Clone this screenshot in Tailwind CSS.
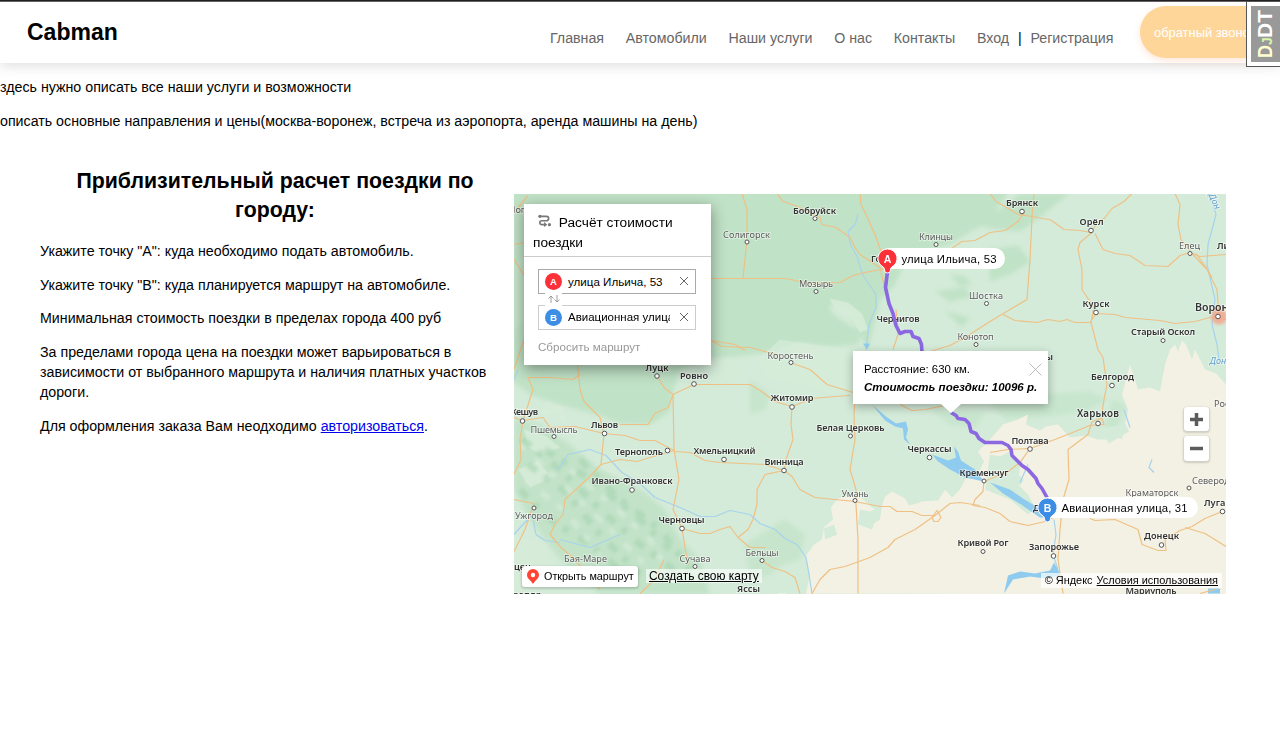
<!DOCTYPE html>
<html lang="ru">
<head>
<meta charset="utf-8">
<title>Cabman</title>
<script src="https://cdn.jsdelivr.net/npm/@tailwindcss/browser@4"></script>
</head>
<body class="relative h-[730px] overflow-hidden bg-white font-['Liberation_Sans',Arial,sans-serif] text-[14.23px] leading-[19.8px] text-black">
<div class="h-[2px] border-b border-[#666] bg-[#231f22]"></div>
<header class="flex h-[61px] items-start bg-white shadow-[0_3px_12px_rgba(0,0,0,0.13)]">
  <div class="ml-[27px] mt-[15px] text-[23px] leading-[30px] font-bold whitespace-nowrap">Cabman</div>
  <nav class="ml-auto mt-[27.400px] mr-[26.500px] flex gap-[21.700px] whitespace-nowrap text-[#666]">
    <a>Главная</a><a>Автомобили</a><a>Наши услуги</a><a>О нас</a><a>Контакты</a>
    <div class="flex gap-[8.800px]"><a>Вход</a><span class="text-black">|</span><a>Регистрация</a></div>
  </nav>
  <button class="mt-[4px] h-[52px] w-[140px] shrink-0 rounded-l-full bg-[#ffd699] pt-[2px] pl-[14px] text-left text-[12.9px] whitespace-nowrap text-white shadow-[0_3px_7px_rgba(255,150,90,0.22)]">обратный звонок</button>
</header>
<div class="absolute top-[1px] left-[1246px] h-[66px] w-[40px] border border-[#555] bg-white p-[4px]">
  <div class="flex h-[56px] w-[40px] items-center bg-[#999]">
    <svg width="30" height="56" viewBox="0 0 30 56" font-family="Liberation Sans, Arial, sans-serif" font-weight="bold" fill="#fff"><g transform="translate(21 52) rotate(-90)"><text font-size="20" x="0" y="0" textLength="13" lengthAdjust="spacingAndGlyphs" fill="#ffffd0">D</text><text font-size="14" x="13" y="0" textLength="7" fill="#d8f5a8">J</text><text font-size="21" x="20" y="0" textLength="28" lengthAdjust="spacingAndGlyphs">DT</text></g></svg>
  </div>
</div>
<main>
  <p class="mt-[15px]">здесь нужно описать все наши услуги и возможности</p>
  <p class="mt-[14px]">описать основные направления и цены(москва-воронеж, встреча из аэропорта, аренда машины на день)</p>
  <div class="mt-[35px] flex items-start">
    <section class="ml-[40px] w-[470px] shrink-0">
      <h2 class="text-center text-[21.3px] leading-[29.6px] font-bold">Приблизительный расчет поездки по<br>городу:</h2>
      <div class="mt-[16px] flex flex-col gap-[14.050px] whitespace-nowrap">
        <p>Укажите точку "А": куда необходимо подать автомобиль.</p>
        <p>Укажите точку "В": куда планируется маршрут на автомобиле.</p>
        <p>Минимальная стоимость поездки в пределах города 400 руб</p>
        <p>За пределами города цена на поездки может варьироваться в<br>зависимости от выбранного маршрута и наличия платных участков<br>дороги.</p>
        <p>Для оформления заказа Вам неодходимо <a class="text-[#0000ee] underline">авторизоваться</a>.</p>
      </div>
    </section>
    <section class="relative mt-[27.400px] ml-[4px] h-[400px] w-[712px] shrink-0 overflow-hidden bg-[#d3ead7]">
      <svg class="block" width="712" height="400" viewBox="514 194.500 712 400">
        <defs><filter id="soft" x="-5%" y="-5%" width="110%" height="110%"><feGaussianBlur stdDeviation="2"/></filter><filter id="hills"><feGaussianBlur stdDeviation="1.800"/></filter></defs>
        <rect x="514" y="194" width="712" height="401" fill="#d4ebd9"/>
        <!-- forests -->
        <g fill="#c0e2c6" filter="url(#soft)">
          <path d="M510 190H1010L1000 205 985 225 970 232 950 245 930 250 905 262 895 285 880 300 874 325 868 350 862 338 848 312 832 302 830 312 848 325 862 333 858 345 830 347 800 343 775 352 745 356 700 360 680 372 672 395 670 412 650 425 620 424 600 416 560 405 530 395 510 380Z"/>
          <path d="M1000 230L1020 232 1040 218 1055 205 1070 194H1020L1000 210 980 218 985 228ZM990 250L1018 246 1030 262 1010 275 990 282Z"/>
          <path d="M514 420L540 425 570 445 600 470 640 490 665 510 680 540 700 560 710 595H600L560 560 530 520 514 490Z" opacity=".85"/>
          <path d="M750 380L770 395 765 410 750 415ZM785 520L805 535 800 560 782 565 770 575 750 580 745 545Z" opacity=".7"/>
          <path d="M935 292L965 288 972 297 950 302ZM945 312L970 318 962 328ZM950 275l14 2 8 7-12 3Z"/>
          <path d="M990 405L1045 395 1090 392 1108 400 1085 412 1040 418 1005 420ZM930 410L985 414 975 428 950 425ZM1112 400L1125 405 1118 430 1104 428Z" opacity=".6"/>
        </g>
        <g fill="#d6ecd9" opacity=".9">
          <path d="M515 265L540 240 560 258 548 300 515 330Z" opacity=".3"/>
          <path d="M728 358L748 365 740 380 690 395 684 380 700 368Z" opacity=".5"/>
          <path d="M780 340L820 346 850 350 853 390 830 395 800 385 770 380 758 360Z" opacity=".8"/>
          <path d="M524 430L545 436 560 448 542 455 528 448ZM518 470L538 462 552 478 530 488Z"/>
          <path d="M514 535L545 545 555 575 530 594H514Z"/>
          <path d="M545 402l20 6-3 8-18-5ZM600 455l20 8 24 12-20 4-22-10Z"/>
          <path d="M829 299L848 303 862 314 868 330 860 333 850 318 838 312ZM780 350L800 344 830 352 825 358Z"/>
        </g>
        <!-- mottled hills of the Carpathians -->
        <g fill="none" filter="url(#hills)" opacity=".75">
          <g stroke="#a3d3ad" stroke-width="7" stroke-dasharray="11 9 6 12" opacity=".7">
            <path d="M522 440L560 470 600 510 640 545 680 575"/><path d="M528 465L565 492 600 535 640 575"/><path d="M545 450L590 480 635 515 670 550"/><path d="M520 490L550 520 590 545 620 570"/><path d="M580 460L620 500 660 530 690 570"/>
          </g>
          <g stroke="#dcefdd" stroke-width="5" stroke-dasharray="7 14 10 10" opacity=".7">
            <path d="M520 445L560 482 605 525 650 570"/><path d="M570 470L615 508 650 540 675 585"/><path d="M525 480L565 512 600 555"/><path d="M520 410L560 415 580 440"/>
          </g>
        </g>
        <!-- steppe -->
        <g fill="#f3f1e3">
          <path d="M806 594L810 575 806 556 814 545 822 540 824 528 833 520 831 508 838 499 850 496 862 499 872 508 880 512 885 497 892 492 905 499 909 506 920 503 924 497 935 490 938 484 945 490 952 498 960 490 965 480 976 478 984 462 978 452 990 440 1003 425 1018 420 1028 415 1026 425 1040 431 1046 427 1058 425 1070 438 1086 436 1098 440 1108 440 1113 436 1122 440 1126 420 1128 410 1122 395 1130 365 1138 390 1150 388 1160 392 1165 365 1170 350 1175 345 1178 352 1182 341 1186 345 1192 360 1195 350 1205 370 1216 374 1226 385V595Z"/>
        </g>
        <g fill="#d4ebd9">
          <path d="M860 510L870 512 882 506 880 520 874 524 872 530 858 525ZM990 455L1000 457 1010 452 1020 466 1018 485 1028 495 1035 508 1028 515 1010 500 985 490Z"/>
          <path d="M920 502l8-16 14-8 6 8-10 15ZM1100 430l25-6 4 8-20 12Z"/>
          <path d="M1012 470l12 10-4 6-10-6ZM825 540l12-5-3-10-10 4Z"/>
        </g>
        <!-- rivers and reservoirs -->
        <g fill="none" stroke="#a7d3ec" stroke-width="1.2" stroke-linejoin="round">
          <path d="M858 215L855 225 848 232 850 244 857 257 863 276 876 295 876 308 869 325 866 350"/>
          <path d="M558 470L568 455 590 450 606 456 622 473 640 484 655 498 680 508 700 517 715 517 730 511 750 515 760 524 775 530 785 539 797 545 806 558 809 575 812 594"/>
          <path d="M560 540L590 548 620 535M514 535L532 515 536 535 545 541 560 543M514 380l4-10M1210 194L1216 215 1208 245 1207 265 1215 300 1212 325 1217 345 1219 360"/>
          <path d="M1054 520L1056 535 1053 555 1058 570M1124 410L1130 428M1152 460l-3 8 5 5M1028 465L1020 483"/>
        </g>
        <g fill="#8ecbef">
          <path d="M872 405L886 417 896 424 906 422 908 430 906 438 910 445 904 440 903 429 895 427 885 421Z"/>
          <path d="M932 455L948 461 956 458 954 447 958 452 961 461 975 470 984 482 965 478 950 470 938 462Z"/>
          <path d="M990 483L1010 490 1023 499 1036 507 1048 518 1040 518 1021 505 1003 494Z"/>
          <path d="M1004 594L1008 576 1020 572 1035 574 1050 571 1054 563 1059 572 1062 576 1045 579 1030 577 1013 580Z"/>
          <path d="M863 344h7l-3 6ZM1208 589h12v5h-12Z"/>
        </g>
        <!-- roads -->
        <g fill="none" stroke="#efc084" stroke-width="1.2" stroke-linejoin="round">
          <path d="M777 194L783 202 795 206 820 218 822 225 836 228 850 238 855 248 860 255 880 268 885 290M860 194L861 205 866 215 875 235 884 260M750 279L785 279 810 284 840 283 853 276 865 273 890 268 930 267"/>
          <path d="M750 279L710 279 700 275 640 270M742 194L747 210 747 240 743 279M711 341L735 345 745 351M514 245L530 242 560 230M514 213L528 196M514 260L530 285 524 340 514 370"/>
          <path d="M990 233L1005 231 1018 222 1025 212M990 194L996 202 1005 207 1018 215 1032 217 1042 219 1050 220 1064 230 1080 231 1091 233 1096 225 1105 218 1112 209 1124 202 1132 194M1034 194L1032 217 1030 260 1027 300 1005 313 990 322 965 338 950 346 920 355"/>
          <path d="M950 250L962 242 975 241 990 233M1003 315L1015 321 1037 323 1048 320 1060 322 1067 320 1075 323 1090 323 1096 314 1115 315 1125 318 1160 321 1175 324 1195 322 1210 318 1226 320M1092 233L1080 243 1078 250 1082 270 1082 290 1094 308 1091 323 1098 350 1103 358 1105 372 1107 385 1104 400 1101 420"/>
          <path d="M1095 234L1103 250 1115 254 1130 256 1145 266 1168 267 1180 256 1190 253 1200 257 1226 255M1175 194L1180 205 1178 225 1181 240 1185 245 1192 254 1207 270 1217 290 1219 315M1196 254L1206 268 1212 278"/>
          <path d="M711 341L722 347 750 348 765 352 780 356M793 364L810 370 827 385 853 393M694 385L750 385 760 391 775 402 792 407M694 385L673 395M792 407L812 399 835 397 850 396"/>
          <path d="M792 407L791 425 793 440 786 460 784 471 765 465 720 463 705 461 690 453 674 452M784 471L792 477 800 490 815 498 835 500 855 502 880 507 890 507 897 512 912 512 922 516 935 516 950 504 960 503 980 506M784 471L765 475 757 490 757 505 753 520 748 530 738 538"/>
          <path d="M577 360L580 390 584 402 600 418 604 434 575 427 550 428 543 418 523 421 514 418M620 425L648 425 655 414 668 408 673 395M657 376L664 388 673 395 674 450 679 480 673 510 682 529 685 548 688 565M682 529L700 534 710 534 720 530 730 527 738 538 750 548 766 548M604 434L601 465 590 477 565 500 563 515 555 525 550 535 560 547 575 560 600 590"/>
          <path d="M604 434L625 436 640 441 655 441 674 451 650 458 637 462 620 460 601 465M514 475L521 460 520 440 523 421 533 390 528 378 550 378 573 380 580 375M514 500L534 504 525 530 514 552M762 561L772 568 785 572 795 578 800 594"/>
          <path d="M855 400L854 415 855 440 850 470 856 490 856 505 858 540 858 594M812 594L820 580 830 570 845 567 870 558 888 548 895 540 915 530 935 516"/>
          <path d="M900 405L912 411 925 410 945 406M984 481L983 492 975 500 973 506 985 508 1000 514 1010 522 1028 526 1045 522 1058 516 1080 514M1030 449L1020 463 1008 472 984 482M1030 449L1055 440 1080 430 1090 426 1104 425 1102 419 1092 422 1088 435 1068 450 1069 480 1063 500 1060 530 1058 560 1063 594"/>
          <path d="M1090 519L1095 521 1115 520 1138 530 1142 545 1158 551 1166 551 1165 540 1180 531 1192 527 1205 519 1222 512M1185 528L1205 534 1226 547M1200 594L1215 590M640 594L655 580 664 560"/>
          <path d="M990 453L1008 450 1030 449M893 350L898 335 896 310M932 518l5-7 4 7-3 4h-4Z"/>
        </g>
        <circle cx="1219" cy="317" r="8" fill="#f5a286" opacity=".8" filter="url(#hills)"/>
        <!-- towns -->
        <g fill="#fff" stroke="#555" stroke-width="1">
          <circle cx="815" cy="219" r="2"/><circle cx="1022" cy="212" r="2.3"/><circle cx="1091" cy="231" r="2.3"/><circle cx="936" cy="245" r="2"/><circle cx="747" cy="242.500" r="2"/><circle cx="816" cy="292" r="2"/><circle cx="986.500" cy="304" r="2"/><circle cx="976" cy="345" r="2"/><circle cx="1096" cy="313" r="2.3"/><circle cx="1190" cy="254" r="2"/><circle cx="1163" cy="341" r="2"/><circle cx="1218" cy="317" r="2.3"/><circle cx="1112" cy="386" r="2.3"/><circle cx="791" cy="363" r="2"/><circle cx="792" cy="407.500" r="2.3"/><circle cx="694" cy="384.500" r="2.3"/><circle cx="657" cy="376.500" r="2.3"/><circle cx="522.500" cy="421.500" r="2.300"/><circle cx="554" cy="437" r="2"/><circle cx="604.500" cy="434" r="2.300"/><circle cx="667.500" cy="451" r="2.300"/><circle cx="724" cy="460" r="2.300"/><circle cx="784" cy="471" r="2.300"/><circle cx="850.500" cy="436.500" r="2"/><circle cx="929.500" cy="458" r="2.300"/><circle cx="984" cy="481.500" r="2"/><circle cx="855" cy="501" r="2"/><circle cx="1030" cy="449.500" r="2.300"/><circle cx="1098" cy="424" r="2.300"/><circle cx="1189" cy="488.500" r="2"/><circle cx="1222.500" cy="512" r="2.300"/><circle cx="1161.500" cy="545.500" r="2.300"/><circle cx="1053.500" cy="556.500" r="2.300"/><circle cx="983" cy="552" r="2"/><circle cx="762" cy="561" r="2"/><circle cx="695" cy="567" r="2"/><circle cx="682" cy="529" r="2.300"/><circle cx="632" cy="490.500" r="2.300"/><circle cx="534" cy="508.500" r="2"/>
        </g>
        <g font-family="Noto Sans, sans-serif" font-size="9.2" fill="#5a5a5a" text-anchor="middle" stroke="#fff" stroke-opacity=".55" stroke-width="1.6" paint-order="stroke">
          <text x="746.500" y="238" textLength="47">Солигорск</text><text x="936" y="240.500" textLength="34">Клинцы</text><text x="816" y="287" textLength="34">Мозырь</text><text x="986" y="299.500" textLength="34">Шостка</text><text x="975.500" y="340.500" textLength="36">Конотоп</text><text x="1189.500" y="249.500" textLength="21">Елец</text><text x="790.500" y="359" textLength="46">Коростень</text><text x="554" y="433" textLength="47">Пшемысль</text><text x="855" y="497" textLength="27">Умань</text><text x="1152" y="496.500" textLength="53">Краматорск</text><text x="762" y="556" textLength="33">Бельцы</text><text x="695" y="562" textLength="31">Сучава</text><text x="534" y="519" textLength="38">Ужгород</text><text x="585.500" y="562.500" textLength="43">Бая-Маре</text>
          <g text-anchor="start"><text x="1214" y="407">Россошь</text><text x="1192" y="484">Северодонецк</text><text x="509" y="213">Лог</text></g>
          <g fill="#333" font-weight="600">
            <text x="814.500" y="214" textLength="43">Бобруйск</text><text x="1022" y="206.500" textLength="32">Брянск</text><text x="1091.500" y="225" textLength="24">Орёл</text><text x="898" y="322.500" textLength="43">Чернигов</text><text x="1096" y="307" textLength="27">Курск</text><text x="1163" y="335.500" textLength="64">Старый Оскол</text><text x="1112.500" y="380.500" textLength="43">Белгород</text><text x="792" y="401.500" textLength="43">Житомир</text><text x="694" y="379.500" textLength="28">Ровно</text><text x="657" y="371" textLength="23">Луцк</text><text x="604.500" y="428.500" textLength="27">Львов</text><text x="639" y="455" textLength="48">Тернополь</text><text x="724.500" y="454" textLength="62">Хмельницкий</text><text x="784" y="465.500" textLength="39">Винница</text><text x="850.500" y="431" textLength="68">Белая Церковь</text><text x="929.500" y="452.500" textLength="44">Черкассы</text><text x="984" y="476" textLength="49">Кременчуг</text><text x="1030" y="444.500" textLength="37">Полтава</text><text x="1098" y="417.500" font-size="9.8" textLength="42">Харьков</text><text x="1161.500" y="539.500" textLength="35">Донецк</text><text x="1054" y="550.500" textLength="50">Запорожье</text><text x="983" y="546.500" textLength="51">Кривой Рог</text><text x="681.500" y="523" textLength="46">Черновцы</text><text x="632" y="484.500" textLength="81">Ивано-Франковск</text><text x="748.500" y="592" textLength="23">Яссы</text><text x="1151" y="594.500" textLength="51">Мариуполь</text><text x="797" y="600" textLength="37">Кишинёв</text>
            <g text-anchor="start"><text x="1195" y="311" font-size="10.7" textLength="48" lengthAdjust="spacingAndGlyphs">Воронеж</text><text x="1217" y="249">Липецк</text><text x="508" y="415" textLength="30">Жешув</text><text x="514" y="570">цен</text><text x="513" y="598">рапля</text><text x="1204" y="506">Луганск</text><text x="871" y="262">Гомель</text><text x="1033" y="511">Днепр</text><text x="1026" y="360" textLength="27">Сумы</text></g>
          </g>
          <g fill="#5d9ccb" font-style="italic" font-size="9"><text x="1212" y="203" transform="rotate(65 1212 203)">Дон</text><text x="1218" y="364">Дон</text></g>
        </g>
        <!-- driving route -->
        <path d="M888 268L887 276 885.500 288 889 304 893 314 896 326 900 334 905 332 911 332 913 337 919 339 921.500 345 922 354M951 413L956 416 958 419 965 420 969 424 971 432 976 434 979 439 985 443 1002 443 1008 446 1011 450 1012 456 1019 463 1022 466 1028 470 1036 479 1038 484 1042 489 1047 498 1048 510" fill="none" stroke="#8b68e2" stroke-width="3.600" stroke-linejoin="round"/>
        <!-- endpoint captions -->
        <g font-family="Liberation Sans, Arial, sans-serif" font-size="11.300">
          <rect x="879" y="248.500" width="126" height="21" rx="10.500" fill="#fff"/>
          <rect x="1038" y="497.500" width="160" height="21" rx="10.500" fill="#fff"/>
          <path d="M887.500 249.500a9.500 9.500 0 0 0-4.300 18q1.300.8 1.300 3a3 3 0 0 0 6 0q0-2.200 1.300-3a9.500 9.500 0 0 0-4.300-18Z" fill="#fb3038" stroke="#fff" stroke-width="1"/>
          <path d="M1047.500 498.500a9.500 9.500 0 0 0-4.300 18q1.300.8 1.300 3a3 3 0 0 0 6 0q0-2.200 1.300-3a9.500 9.500 0 0 0-4.300-18Z" fill="#3c8de4" stroke="#fff" stroke-width="1"/>
          <g fill="#fff" font-weight="bold" font-size="10.500" text-anchor="middle"><text x="887.500" y="263">A</text><text x="1047.500" y="512">B</text></g>
          <text x="901.500" y="263" textLength="95">улица Ильича, 53</text><text x="1061.500" y="512" textLength="126">Авиационная улица, 31</text>
        </g>
      </svg>

      <!-- route panel -->
      <div class="absolute top-[10px] left-[10px] h-[161px] w-[187px] bg-white shadow-[0_4px_14px_rgba(0,0,0,0.4)]">
        <div class="h-[53px] border-b border-[#ccc] pt-[9px] pl-[9px] text-[13.700px] leading-[20.5px]">
          <svg class="mr-[3px] ml-[5px] inline-block align-[0px]" width="14" height="13" viewBox="0 0 15 14" fill="none" stroke="#777" stroke-width="1.800"><circle cx="2" cy="2.500" r="1.700" fill="#777" stroke="none"/><path d="M3 2.500H9a2.400 2.400 0 0 1 0 4.800H4a2.100 2.100 0 0 0 0 4.200H7.500"/><path d="M6.500 8.500L10 11.500 6.500 14Z" fill="#777" stroke="none"/><circle cx="12.300" cy="11.500" r="1.700" fill="#777" stroke="none"/></svg>
          <span>Расчёт стоимости<br>поездки</span>
        </div>
        <div class="relative mt-[12px] ml-[14px] flex w-[158px] flex-col gap-[11px] text-[11.600px]">
          <div class="flex h-[25px] items-center border border-[#aaa] bg-white pr-[6px] pl-[6px]">
            <span class="flex size-[17px] shrink-0 items-center justify-center rounded-full bg-[#fb3038] text-[9.5px] font-bold text-white">A</span>
            <span class="ml-[6px] w-[102px] overflow-hidden whitespace-nowrap">улица Ильича, 53</span>
            <svg class="ml-auto" width="10" height="10" viewBox="0 0 10 10" stroke="#666"><path d="M1 1L9 9M9 1L1 9"/></svg>
          </div>
          <div class="flex h-[25px] items-center border border-[#ccc] bg-white pr-[6px] pl-[6px]">
            <span class="flex size-[17px] shrink-0 items-center justify-center rounded-full bg-[#3c8de4] text-[9.5px] font-bold text-white">B</span>
            <span class="ml-[6px] w-[102px] overflow-hidden text-[11.500px] whitespace-nowrap">Авиационная улица, 31</span>
            <svg class="ml-auto" width="10" height="10" viewBox="0 0 10 10" stroke="#666"><path d="M1 1L9 9M9 1L1 9"/></svg>
          </div>
          <div class="absolute top-[24px] left-[7px] flex h-[13px] w-[17px] items-center justify-center bg-white"><svg width="12" height="8" viewBox="0 0 12 8" fill="none" stroke="#888" stroke-width=".8"><path d="M3 8V1M.5 3.500L3 1 5.500 3.500M9 0V7M6.500 4.500L9 7 11.500 4.500"/></svg></div>
        </div>
        <div class="mt-[7.500px] ml-[14px] text-[11.600px] leading-[19px] text-[#999]">Сбросить маршрут</div>
      </div>

      <!-- price balloon -->
      <div class="absolute top-[157px] left-[339px] h-[53px] w-[195px] bg-white pt-[9px] pl-[11px] text-[11.4px] leading-[18px] whitespace-nowrap shadow-[0_3px_9px_rgba(0,0,0,0.3)]">
        <div>Расстояние: 630 км.</div>
        <div class="text-[11.5px] font-bold italic">Стоимость поездки: 10096 р.</div>
        <svg class="absolute top-[12px] left-[176px]" width="13" height="13" viewBox="0 0 13 13" stroke="#bbb"><path d="M.5.500L12.500 12.500M12.500.500L.5 12.500"/></svg>
        <svg class="absolute top-[53px] left-[88px]" width="20" height="10" viewBox="0 0 20 10"><path d="M0 0H20L10 9Z" fill="#fff"/></svg>
      </div>

      <!-- zoom buttons -->
      <div class="absolute top-[213px] left-[670px] flex flex-col gap-[5px]">
        <div class="flex size-[24.5px] items-center justify-center rounded-[3px] bg-white shadow-[0_1px_2px_1px_rgba(0,0,0,0.15)]"><svg width="13" height="13" viewBox="0 0 13 13" stroke="#5c5c5c" stroke-width="3.500"><path d="M0 6.500H13M6.500 0V13"/></svg></div>
        <div class="flex size-[24.5px] items-center justify-center rounded-[3px] bg-white shadow-[0_1px_2px_1px_rgba(0,0,0,0.15)]"><svg width="13" height="13" viewBox="0 0 13 13" stroke="#5c5c5c" stroke-width="3.500"><path d="M0 6.500H13"/></svg></div>
      </div>

      <!-- map footer -->
      <div class="absolute top-[372px] left-[8px] flex h-[21px] w-[116px] items-center gap-[5px] rounded-[3px] bg-white pt-px pl-[5px] text-[10.8px] whitespace-nowrap shadow-[0_1px_2px_1px_rgba(0,0,0,0.15)]">
        <svg class="shrink-0" width="12" height="15" viewBox="0 0 12 15"><path d="M6 0a6 6 0 0 0-6 6c0 4 4 5 6 9 2-4 6-5 6-9a6 6 0 0 0-6-6Z" fill="#f43"/><circle cx="6" cy="6" r="2.200" fill="#fff"/></svg>Открыть маршрут
      </div>
      <div class="absolute top-[375px] left-[132px] h-[14px] bg-white/60 px-[3px] text-[11.95px] leading-[14px] whitespace-nowrap underline">Создать свою карту</div>
      <div class="absolute top-[379px] right-[4px] flex h-[15px] gap-[4px] bg-white/70 px-[4px] text-[10.95px] leading-[15px] whitespace-nowrap"><span>© Яндекс</span><span class="underline">Условия использования</span></div>
    </section>
  </div>
</main>
</body>
</html>
